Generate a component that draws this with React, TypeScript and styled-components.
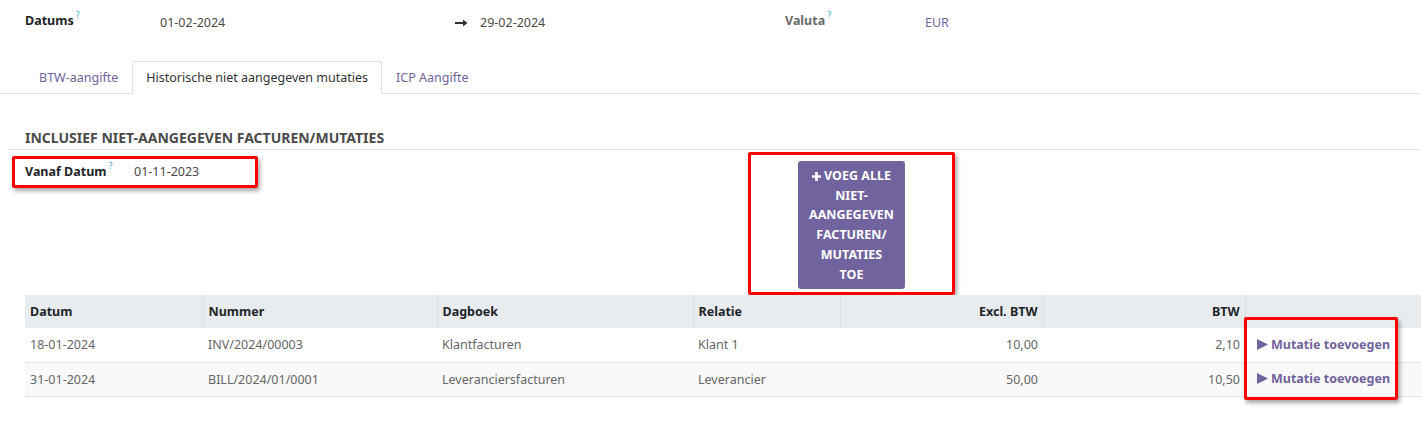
import React from "react";
import styled, { createGlobalStyle } from "styled-components";

const GlobalStyle = createGlobalStyle`
  html, body { margin: 0; padding: 0; background: #fff; }
  body {
    font-family: "Noto Sans", "Open Sans", sans-serif;
    font-size: 12.5px;
    color: #212529;
  }
  * { box-sizing: border-box; }
`;

const PURPLE = "#71639e";
const RED = "#ff0000";

const Page = styled.div`
  width: 1421px;
  height: 426px;
  overflow: hidden;
  background: #fff;
`;

const HeaderGroup = styled.div`
  display: grid;
  grid-template-columns: 135px 625px 140px 1fr;
  padding: 10px 0 0 25px;
  line-height: 24px;
`;

const Label = styled.div<{ $muted?: boolean }>`
  font-weight: 700;
  color: ${(p) => (p.$muted ? "#6b6b6b" : "#212529")};
  line-height: 22px;
  white-space: nowrap;
`;

const Help = styled.sup`
  color: #3aa8c7;
  font-weight: 400;
  font-size: 9px;
  margin-left: 2px;
  vertical-align: 7px;
  line-height: 0;
`;

const Value = styled.div<{ $link?: boolean }>`
  color: ${(p) => (p.$link ? PURPLE : "#4a4a4a")};
  line-height: 26px;
`;

const DateRange = styled.div`
  display: flex;
  align-items: center;
  color: #4a4a4a;
  line-height: 26px;
`;

const DateStart = styled.span`
  width: 295px;
`;

const Arrow = styled.span`
  display: inline-flex;
  align-items: center;
  width: 25px;
`;

const TabBar = styled.div`
  margin-top: 25px;
  display: flex;
  padding-left: 25px;
  border-bottom: 1px solid #dee2e6;
  height: 33px;
`;

const Tab = styled.div<{ $active?: boolean }>`
  height: 33px;
  padding: 6px 13px;
  line-height: 19px;
  border: 1px solid ${(p) => (p.$active ? "#dee2e6" : "transparent")};
  border-bottom-color: ${(p) => (p.$active ? "#fff" : "transparent")};
  background: ${(p) => (p.$active ? "#fff" : "transparent")};
  color: ${(p) => (p.$active ? "#333" : PURPLE)};
  border-radius: 2px 2px 0 0;
  white-space: nowrap;
`;

const Section = styled.div`
  padding-left: 8px;
`;

const SectionTitle = styled.div`
  margin-top: 34px;
  padding: 0 0 1px 17px;
  line-height: 20px;
  font-size: 14px;
  font-weight: 700;
  color: #4a4a4a;
  text-transform: uppercase;
  border-bottom: 1px solid #e3e3e3;
`;

const FormRow = styled.div`
  display: grid;
  grid-template-columns: 736px 207px;
  align-items: start;
  padding-left: 4px;
  height: 145px;
`;

const Highlight = styled.div`
  border: 3px solid ${RED};
  border-radius: 2px;
  box-shadow: 2px 3px 4px rgba(0, 0, 0, 0.35);
`;

const FieldBox = styled(Highlight)`
  margin-top: 6px;
  width: 246px;
  height: 32px;
  display: flex;
  align-items: center;
  padding-left: 10px;
`;

const FieldLabel = styled(Label)`
  width: 109px;
`;

const ButtonBox = styled(Highlight)`
  margin-top: 2px;
  height: 143px;
  display: flex;
  justify-content: center;
  padding-top: 6px;
`;

const ActionButton = styled.button`
  width: 107px;
  height: 128px;
  background: ${PURPLE};
  color: #fff;
  border: none;
  border-radius: 3px;
  padding: 5px 4px;
  font-family: inherit;
  font-size: 12.5px;
  font-weight: 700;
  line-height: 19.7px;
  text-transform: uppercase;
  text-align: center;
  cursor: pointer;
`;

const PlusIcon = styled.svg`
  width: 9px;
  height: 9px;
  margin-right: 3px;
  vertical-align: -0.5px;
`;

const TableWrap = styled.div`
  position: relative;
  margin-left: 25px;
`;

const Table = styled.table`
  width: 1396px;
  border-collapse: collapse;
  table-layout: fixed;
`;

const Th = styled.th<{ $w: number; $right?: boolean }>`
  width: ${(p) => p.$w}px;
  height: 33px;
  padding: 0 5px;
  background: #e9ecef;
  font-weight: 700;
  color: #212529;
  text-align: ${(p) => (p.$right ? "right" : "left")};
  border-left: 1px solid #dcdfe3;
  &:first-child { border-left: none; }
  white-space: nowrap;
`;

const Tr = styled.tr<{ $alt?: boolean }>`
  background: ${(p) => (p.$alt ? "#f9f9f9" : "#fff")};
  border-bottom: 1px solid #e2e4e7;
`;

const Td = styled.td<{ $right?: boolean }>`
  height: 34px;
  padding: 0 5px;
  color: #666;
  text-align: ${(p) => (p.$right ? "right" : "left")};
  white-space: nowrap;
`;

const ActionCell = styled.td`
  padding: 0 0 0 12px;
`;

const LinkButton = styled.span`
  display: inline-flex;
  align-items: center;
  gap: 3px;
  color: ${PURPLE};
  font-weight: 700;
  white-space: nowrap;
`;

const Triangle = styled.svg`
  width: 11px;
  height: 11px;
`;

const RowHighlight = styled(Highlight)`
  position: absolute;
  left: 1219px;
  top: 22px;
  width: 154px;
  height: 83px;
  pointer-events: none;
`;

const rows = [
  { datum: "18-01-2024", nummer: "INV/2024/00003", dagboek: "Klantfacturen", relatie: "Klant 1", excl: "10,00", btw: "2,10" },
  { datum: "31-01-2024", nummer: "BILL/2024/01/0001", dagboek: "Leveranciersfacturen", relatie: "Leverancier", excl: "50,00", btw: "10,50" },
];

export default function App() {
  return (
    <Page>
      <GlobalStyle />
      <HeaderGroup>
        <Label>
          Datums<Help>?</Help>
        </Label>
        <DateRange>
          <DateStart>01-02-2024</DateStart>
          <Arrow>
            <svg width="13" height="8" viewBox="0 0 13 8">
              <path d="M0 4h9" stroke="#333" strokeWidth="2" />
              <path d="M8 0.5L12.5 4L8 7.5z" fill="#333" />
            </svg>
          </Arrow>
          <span>29-02-2024</span>
        </DateRange>
        <Label $muted>
          Valuta<Help>?</Help>
        </Label>
        <Value $link>EUR</Value>
      </HeaderGroup>

      <TabBar>
        <Tab>BTW-aangifte</Tab>
        <Tab $active>Historische niet aangegeven mutaties</Tab>
        <Tab>ICP Aangifte</Tab>
      </TabBar>

      <Section>
        <SectionTitle>Inclusief niet-aangegeven facturen/mutaties</SectionTitle>
        <FormRow>
          <FieldBox>
            <FieldLabel>
              Vanaf Datum<Help>?</Help>
            </FieldLabel>
            <Value>01-11-2023</Value>
          </FieldBox>
          <ButtonBox>
            <ActionButton>
              <PlusIcon viewBox="0 0 10 10">
                <path d="M5 0v10M0 5h10" stroke="#fff" strokeWidth="3" />
              </PlusIcon>
              Voeg alle
              <br />
              niet-
              <br />
              aangegeven
              <br />
              facturen/
              <br />
              mutaties
              <br />
              toe
            </ActionButton>
          </ButtonBox>
        </FormRow>
      </Section>

      <TableWrap>
        <Table>
          <thead>
            <tr>
              <Th $w={178}>Datum</Th>
              <Th $w={234}>Nummer</Th>
              <Th $w={256}>Dagboek</Th>
              <Th $w={147}>Relatie</Th>
              <Th $w={203} $right>Excl. BTW</Th>
              <Th $w={202} $right>BTW</Th>
              <Th $w={176}></Th>
            </tr>
          </thead>
          <tbody>
            {rows.map((r, i) => (
              <Tr key={r.nummer} $alt={i % 2 === 1}>
                <Td>{r.datum}</Td>
                <Td>{r.nummer}</Td>
                <Td>{r.dagboek}</Td>
                <Td>{r.relatie}</Td>
                <Td $right>{r.excl}</Td>
                <Td $right>{r.btw}</Td>
                <ActionCell>
                  <LinkButton>
                    <Triangle viewBox="0 0 10 10">
                      <path d="M0 0L10 5L0 10z" fill={PURPLE} />
                    </Triangle>
                    Mutatie toevoegen
                  </LinkButton>
                </ActionCell>
              </Tr>
            ))}
          </tbody>
        </Table>
        <RowHighlight />
      </TableWrap>
    </Page>
  );
}
